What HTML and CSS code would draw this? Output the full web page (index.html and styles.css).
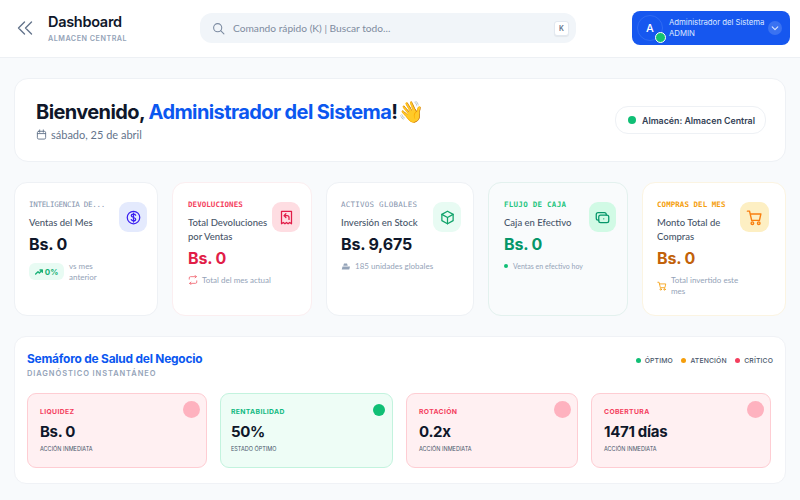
FILE: index.html
```html
<!DOCTYPE html>
<html lang="es">
<head>
<meta charset="utf-8">
<title>Dashboard</title>
<link rel="stylesheet" href="styles.css">
</head>
<body>
<header class="topbar">
  <svg class="collapse" viewBox="0 0 16 16" width="16" height="16"><path d="M7.500 2 1.500 8l6 6M14.500 2l-6 6 6 6"/></svg>
  <div class="brand">
    <div class="brand-title">Dashboard</div>
    <div class="brand-sub">ALMACEN CENTRAL</div>
  </div>
  <div class="search">
    <svg class="search-icon" viewBox="0 0 24 24" width="13" height="13"><circle cx="10.500" cy="10.500" r="7.500"/><path d="m16 16 6 6"/></svg>
    <span class="search-text">Comando rápido (K) | Buscar todo...</span>
    <span class="kbd">K</span>
  </div>
  <div class="user">
    <div class="avatar">A<span class="online"></span></div>
    <div class="user-text"><div>Administrador del Sistema</div><div>ADMIN</div></div>
    <div class="chev"><svg viewBox="0 0 10 10" width="8" height="8"><path d="m1.500 3.500 3.500 3.500 3.500-3.500"/></svg></div>
  </div>
</header>
<main class="page">
  <section class="hero">
    <div>
      <h1 class="hero-title">Bienvenido, <span class="blue">Administrador del Sistema</span>!<span class="wave">👋</span></h1>
      <div class="hero-date">
        <svg viewBox="0 0 24 24" width="11" height="11"><rect x="3" y="5" width="18" height="17" rx="3"/><path d="M3 10h18M8 2v5M16 2v5"/></svg>
        sábado, 25 de abril
      </div>
    </div>
    <div class="pill"><span class="pill-dot"></span>Almacén: Almacen Central</div>
  </section>

  <section class="kpis">
    <article class="kpi kpi-a">
      <div class="kpi-main">
        <div class="kpi-label c-slate">INTELIGENCIA DE...</div>
        <div class="kpi-name">Ventas del Mes</div>
        <div class="kpi-value">Bs. 0</div>
      </div>
      <div class="kpi-icon i-indigo"><svg viewBox="0 0 24 24" width="15" height="15"><circle cx="12" cy="12" r="10"/><path d="M15.500 8.500c-.6-1.200-1.900-1.800-3.500-1.800-2 0-3.500 1-3.500 2.600 0 3.500 7 1.900 7 5.300 0 1.600-1.500 2.700-3.500 2.700-1.700 0-3-.7-3.600-2M12 4.800v14.400"/></svg></div>
      <div class="kpi-foot"><span class="trend"><svg viewBox="0 0 12 12" width="8" height="8"><path d="m1 9 3.500-3.500 2 2L11 3M7.500 3H11v3.500"/></svg>0%</span><span class="foot-text">vs mes anterior</span></div>
    </article>
    <article class="kpi kpi-b">
      <div class="kpi-main">
        <div class="kpi-label c-red">DEVOLUCIONES</div>
        <div class="kpi-name">Total Devoluciones por Ventas</div>
        <div class="kpi-value t-red">Bs. 0</div>
      </div>
      <div class="kpi-icon i-red"><svg viewBox="0 0 24 24" width="15" height="15"><path d="M4 2h16v20l-3-2-2.500 2-2.500-2-2.500 2L7 20l-3 2z"/><path d="m11 6-3 3 3 3M8 9h5a3 3 0 0 1 3 3v3"/></svg></div>
      <div class="kpi-foot"><svg class="fi fi-red" viewBox="0 0 24 24" width="10" height="10"><path d="M3 10V7a3 3 0 0 1 3-3h14M17 1l3 3-3 3M21 14v3a3 3 0 0 1-3 3H4M7 23l-3-3 3-3"/></svg><span class="foot-text">Total del mes actual</span></div>
    </article>
    <article class="kpi kpi-c">
      <div class="kpi-main">
        <div class="kpi-label c-slate">ACTIVOS GLOBALES</div>
        <div class="kpi-name">Inversión en Stock</div>
        <div class="kpi-value">Bs. 9,675</div>
      </div>
      <div class="kpi-icon i-mint"><svg viewBox="0 0 24 24" width="15" height="15"><path d="m12 2 9 5v10l-9 5-9-5V7z"/><path d="m3 7 9 5 9-5M12 12v10"/></svg></div>
      <div class="kpi-foot"><svg class="fs" viewBox="0 0 12 12" width="9" height="9"><path d="M4 2h4l1 3H3zM1 10l1-4h10l-1 4z"/></svg><span class="foot-text">185 unidades globales</span></div>
    </article>
    <article class="kpi kpi-d">
      <div class="kpi-main">
        <div class="kpi-label c-green">FLUJO DE CAJA</div>
        <div class="kpi-name">Caja en Efectivo</div>
        <div class="kpi-value t-green">Bs. 0</div>
      </div>
      <div class="kpi-icon i-green"><svg viewBox="0 0 24 24" width="15" height="15"><rect x="6" y="8" width="16" height="12" rx="3"/><path d="M6 16H5a3 3 0 0 1-3-3V7a3 3 0 0 1 3-3h10a3 3 0 0 1 3 3v1"/><path d="M14 14h.01"/></svg></div>
      <div class="kpi-foot"><span class="foot-dot"></span><span class="foot-text tiny">Ventas en efectivo hoy</span></div>
    </article>
    <article class="kpi kpi-e">
      <div class="kpi-main">
        <div class="kpi-label c-amber">COMPRAS DEL MES</div>
        <div class="kpi-name">Monto Total de Compras</div>
        <div class="kpi-value t-amber">Bs. 0</div>
      </div>
      <div class="kpi-icon i-amber"><svg viewBox="0 0 24 24" width="17" height="17"><path d="M2 3h3l3 13h11l2-9H6"/><circle cx="9" cy="20" r="1.800"/><circle cx="18" cy="20" r="1.800"/></svg></div>
      <div class="kpi-foot"><svg class="fi fi-amber" viewBox="0 0 24 24" width="10" height="10"><path d="M2 3h3l3 13h11l2-9H6"/><circle cx="9" cy="20" r="1.800"/><circle cx="18" cy="20" r="1.800"/></svg><span class="foot-text">Total invertido este mes</span></div>
    </article>
  </section>

  <section class="health">
    <div class="health-head">
      <div>
        <h2 class="health-title">Semáforo de Salud del Negocio</h2>
        <div class="health-sub">DIAGNÓSTICO INSTANTÁNEO</div>
      </div>
      <div class="legend">
        <span class="legend-item"><i class="ld g"></i>ÓPTIMO</span>
        <span class="legend-item"><i class="ld o"></i>ATENCIÓN</span>
        <span class="legend-item"><i class="ld r"></i>CRÍTICO</span>
      </div>
    </div>
    <div class="tiles">
      <div class="tile tile-red"><span class="lamp lamp-red"></span><div class="tile-label">LIQUIDEZ</div><div class="tile-value">Bs. 0</div><div class="tile-note">ACCIÓN INMEDIATA</div></div>
      <div class="tile tile-green"><span class="lamp lamp-green"></span><div class="tile-label">RENTABILIDAD</div><div class="tile-value">50%</div><div class="tile-note">ESTADO ÓPTIMO</div></div>
      <div class="tile tile-red"><span class="lamp lamp-red"></span><div class="tile-label">ROTACIÓN</div><div class="tile-value">0.2x</div><div class="tile-note">ACCIÓN INMEDIATA</div></div>
      <div class="tile tile-red"><span class="lamp lamp-red"></span><div class="tile-label">COBERTURA</div><div class="tile-value">1471 días</div><div class="tile-note">ACCIÓN INMEDIATA</div></div>
    </div>
  </section>
</main>
</body>
</html>
```
FILE: styles.css
```css
* { box-sizing: border-box; }
html, body { margin: 0; height: 100%; overflow: hidden; }
body { width: 800px; height: 500px; background: #f8fafc; font-family: Inter, "Noto Sans", sans-serif; color: #0f172a; }
svg { fill: none; stroke: currentColor; stroke-width: 2; stroke-linecap: round; stroke-linejoin: round; flex: none; }

.topbar { height: 58px; background: #fff; border-bottom: 1px solid #edf0f4; display: flex; align-items: center; padding: 0 10px 1px 17px; }
.collapse { color: #64748b; stroke-width: 1.400; }
.brand { margin-left: 15px; width: 152px; }
.brand-title { font-size: 14.500px; font-weight: 600; line-height: 20px; letter-spacing: -.3px; }
.brand-sub { font-size: 7.200px; font-weight: 600; color: #94a3b8; letter-spacing: .5px; line-height: 10px; margin-top: 2px; }
.search { width: 376px; height: 30px; border-radius: 12px; background: #f1f5f9; display: flex; align-items: center; padding: 0 7px 0 12px; }
.search-icon { color: #7c8ba1; }
.search-text { font-family: Lato, sans-serif; font-size: 10.200px; color: #7f8ca0; margin-left: 8px; flex: 1; }
.kbd { width: 15px; height: 15px; background: #fff; border: 1px solid #e2e8f0; border-radius: 3px; font-size: 7px; font-weight: 600; color: #64748b; display: flex; align-items: center; justify-content: center; box-shadow: 0 1px 1px #0000000f; }
.user { margin-left: auto; width: 158px; height: 34px; border-radius: 8px; background: #1657ef; color: #dbe7ff; display: flex; align-items: center; padding: 0 8px 0 5px; }
.avatar { position: relative; width: 26px; height: 26px; border-radius: 50%; border: 1px solid #2f6bf2; color: #fff; font-size: 11px; font-weight: 500; display: flex; align-items: center; justify-content: center; }
.online { position: absolute; right: -4px; bottom: -3px; width: 11px; height: 11px; background: #14c26f; border: 1.500px solid #fff; border-radius: 50%; }
.user-text { margin-left: 6px; font-size: 7.800px; line-height: 11.500px; flex: 1; white-space: nowrap; letter-spacing: -.05px; }
.chev { width: 14px; height: 14px; border-radius: 50%; background: #3a72f1; display: flex; align-items: center; justify-content: center; color: #dbe7ff; }
.chev svg { stroke-width: 1.300; }

.page { padding: 20px 14px 0; display: flex; flex-direction: column; }
.hero { height: 84px; background: #fff; border: 1px solid #eef1f5; border-radius: 14px; display: flex; align-items: center; justify-content: space-between; padding: 0 19px 0 21px; }
.hero-title { margin: 0; font-size: 20px; line-height: 26px; font-weight: 700; letter-spacing: -.6px; white-space: nowrap; }
.blue { color: #0b57f0; }
.wave { font-size: 21px; letter-spacing: 0; margin-left: 1px; }
.hero-date { display: flex; align-items: center; gap: 4px; font-family: Lato, sans-serif; font-size: 11px; color: #64748b; margin-top: 3px; }
.pill { height: 28px; width: 151px; border: 1px solid #eef1f5; border-radius: 13px; display: flex; align-items: center; padding-left: 12px; gap: 6px; font-size: 8.800px; font-weight: 600; color: #334155; white-space: nowrap; background: #fff; }
.pill-dot { width: 8px; height: 8px; background: #10bf75; border-radius: 50%; }

.kpis { display: grid; grid-template-columns: 144px 140px 148px 140px 144px; gap: 14px; margin-top: 20px; height: 134px; }
.kpi { position: relative; min-width: 0; background: #fff; border: 1px solid #eef1f5; border-radius: 13px; padding: 17px 11px 0 14px; }
.kpi-b { border-color: #fbeef0; padding-left: 15px; }
.kpi-d { border-color: #e3f1ee; background: #f9fbfc; padding-left: 15px; }
.kpi-e { border-color: #fbf4e2; }
.kpi-main { padding-right: 36px; }
.kpi-b .kpi-main { padding-right: 25px; }
.kpi-label { font-family: "DejaVu Sans Mono", monospace; font-size: 7.500px; line-height: 10px; letter-spacing: -.3px; white-space: nowrap; font-weight: 400; }
.kpi-c .kpi-label { letter-spacing: .25px; }
.kpi-d .kpi-label { letter-spacing: .27px; font-weight: 700; }
.kpi-b .kpi-label, .kpi-e .kpi-label { font-weight: 700; letter-spacing: .05px; }
.c-slate { color: #8493ad; }
.c-red { color: #f43f5e; }
.c-green { color: #1fc57f; }
.c-amber { color: #f59e0b; }
.kpi-name { font-family: Lato, sans-serif; font-size: 9.500px; line-height: 14px; color: #475569; margin-top: 6px; font-weight: 500; }
.kpi-value { font-size: 16px; font-weight: 700; line-height: 22px; margin-top: 3px; white-space: nowrap; letter-spacing: -.2px; }
.t-red { color: #e11d48; }
.t-green { color: #059669; }
.t-amber { color: #c2620a; }
.kpi-icon { position: absolute; top: 19px; right: 10px; width: 28px; height: 30px; border-radius: 9px; display: flex; align-items: center; justify-content: center; }
.kpi-b .kpi-icon { right: 11px; }
.kpi-c .kpi-icon { right: 12px; }
.kpi-d .kpi-icon { right: 11px; width: 27px; }
.kpi-e .kpi-icon { right: 16px; width: 29px; }
.i-indigo { background: #e4eafd; color: #3a1ff0; }
.i-red { background: #fedde2; color: #e11d48; }
.i-mint { background: #e8fbf3; color: #10a36a; }
.i-green { background: #d1fae5; color: #059669; }
.i-amber { background: #fdefc3; color: #f97f0f; }
.kpi-foot { display: flex; align-items: center; gap: 5px; margin-top: 6px; }
.trend { flex: none; width: 35px; height: 17px; border-radius: 6px; background: #e8fbf3; color: #17b076; font-size: 8px; font-weight: 700; display: flex; align-items: center; justify-content: center; gap: 2px; }
.foot-text { font-family: Lato, sans-serif; font-size: 8px; line-height: 10.500px; color: #94a3b8; }
.fi-red { color: #f0636f; }
.fi-amber { color: #f59e0b; }
.fs { fill: #94a3b8; stroke: none; }
.foot-dot { width: 4px; height: 4px; border-radius: 50%; background: #10bf75; flex: none; }
.tiny { font-size: 7px; white-space: nowrap; }
.kpi-a .foot-text { max-width: 32px; }
.kpi-b .fi, .kpi-e .fi { margin-right: -1px; }
.kpi-e .foot-text { max-width: 72px; }

.health { margin-top: 20px; height: 148px; background: #fff; border: 1px solid #f0f2f6; border-radius: 12px; padding: 13px 12px 0 12px; }
.health-head { display: flex; justify-content: space-between; align-items: flex-start; }
.health-title { margin: 0; font-size: 11.900px; line-height: 17px; font-weight: 700; color: #0b57f0; letter-spacing: -.2px; }
.health-sub { font-size: 7.500px; line-height: 10px; font-weight: 600; color: #94a3b8; letter-spacing: .9px; margin-top: 2px; }
.legend { display: flex; gap: 8.500px; margin-top: 6px; }
.legend-item { display: flex; align-items: center; gap: 4px; font-size: 6.800px; font-weight: 500; color: #475569; letter-spacing: .15px; }
.ld { width: 5px; height: 5px; border-radius: 50%; }
.ld.g { background: #10bf75; }
.ld.o { background: #f59e0b; }
.ld.r { background: #f43f5e; }
.tiles { display: grid; grid-template-columns: 180px 173px 172px 180px; gap: 13px; margin-top: 14px; height: 75px; }
.tile { position: relative; border-radius: 9px; padding: 13px 12px 0; border: 1px solid; }
.tile-red { background: #fff0f2; border-color: #fecdd3; }
.tile-green { background: #eefdf6; border-color: #c3f3de; padding-left: 10px; }
.tile-label { font-size: 6.800px; line-height: 9px; font-weight: 700; letter-spacing: .35px; }
.tile-red .tile-label { color: #f43f5e; }
.tile-green .tile-label { color: #10b981; }
.tile-value { font-size: 15px; line-height: 22px; font-weight: 700; margin-top: 5px; letter-spacing: -.3px; white-space: nowrap; }
.tile-note { font-size: 5.500px; line-height: 8px; color: #475569; margin-top: 2px; }
.lamp { position: absolute; border-radius: 50%; }
.lamp-red { width: 17px; height: 17px; top: 7px; right: 6px; background: #feb2bf; }
.lamp-green { width: 12px; height: 12px; top: 10px; right: 7px; background: #10bf75; }
```
